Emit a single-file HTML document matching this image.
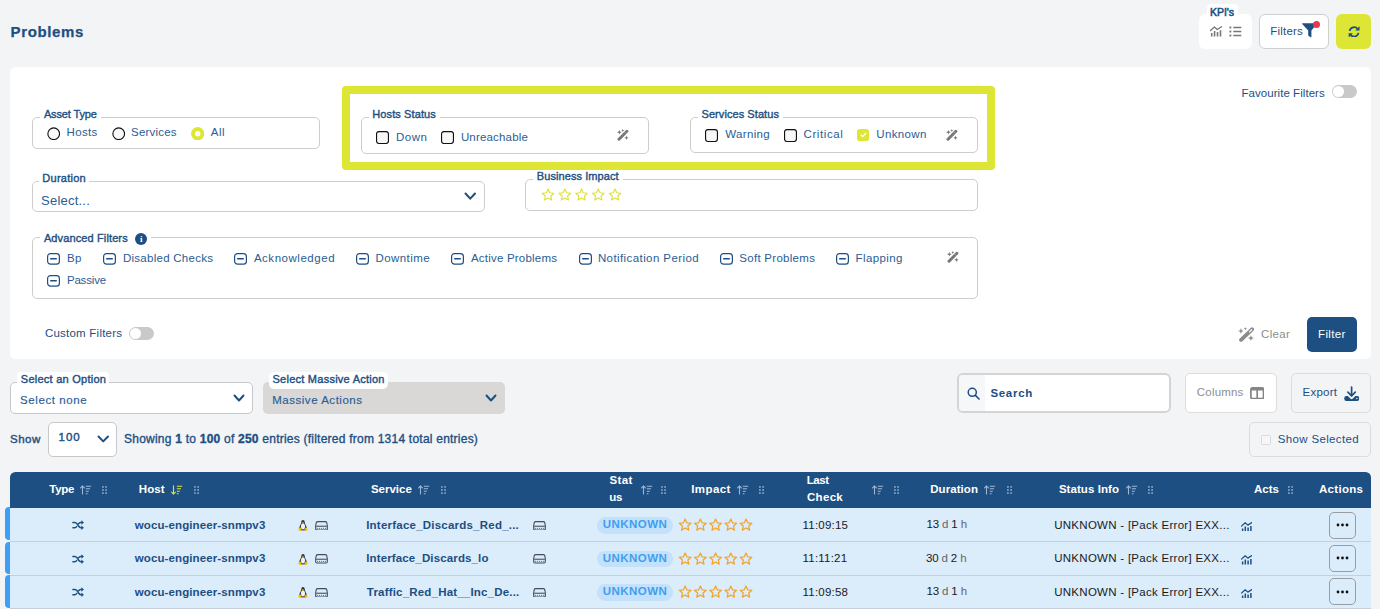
<!DOCTYPE html>
<html lang="en"><head><meta charset="utf-8"><title>Problems</title>
<style>
*{box-sizing:border-box;margin:0;padding:0}
html,body{width:1380px;height:609px;overflow:hidden;background:#f3f4f6;font-family:"Liberation Sans",sans-serif;color:#1d4f82}
.a{position:absolute}
.t{position:absolute;white-space:pre;line-height:1}
.fs{border:1px solid #cdcdcd;border-radius:5px}
</style></head><body>
<div class="t" style="left:10.5px;top:24px;font-size:15px;color:#1d4f82;letter-spacing:0.655px;font-weight:bold;-webkit-text-stroke:0.25px">Problems</div>
<div class="a" style="left:1199px;top:14px;width:53px;height:35px;background:#fff;border-radius:6px"></div>
<div class="a" style="left:1207px;top:4px;width:31px;height:14px;background:#fff;border-radius:4px"></div>
<div class="t" style="left:1210.1px;top:7px;font-size:10.5px;color:#1d4f82;letter-spacing:-0.080px;-webkit-text-stroke:0.550px">KPI's</div>
<svg class="a" style="left:1209.8px;top:26.3px;" width="12.2" height="10.6" viewBox="0 0 11.500 9.600"><path d="M0.500 4.100L4.200 0.800 6.800 3.100 10.900 0.500" fill="none" stroke="#777" stroke-width="1.250" stroke-linecap="round" stroke-linejoin="round"/><path d="M1.600 6.500V9.600M4.300 4.500V9.600M7.100 5.500V9.600M9.900 3.900V9.600" stroke="#777" stroke-width="1.500"/></svg>
<svg class="a" style="left:1229px;top:26px;" width="13" height="11" viewBox="0 0 13 11"><path d="M0.500 1.500h1.800M0.500 5.500h1.800M0.500 9.500h1.800" stroke="#777" stroke-width="1.800"/><path d="M4.300 1.500h8M4.300 5.500h8M4.300 9.500h8" stroke="#777" stroke-width="1.400"/></svg>
<div class="a" style="left:1259px;top:14px;width:70px;height:35px;background:#fff;border:1px solid #cfcfcf;border-radius:6px"></div>
<div class="t" style="left:1270.3px;top:26px;font-size:11.5px;color:#1d4f82;letter-spacing:0.209px;">Filters</div>
<svg class="a" style="left:1302px;top:22px;" width="16" height="16" viewBox="0 0 16 16"><path d="M0.600 1.200h13.800c.5 0 .7.500.4.900L9.400 8.600v6.200c0 .5-.5.700-.9.400l-2-1.500c-.2-.2-.3-.4-.3-.6V8.600L0.200 2.100c-.3-.4-.1-.9.400-.9z" fill="#1d4f82"/></svg>
<div class="a" style="left:1312.9px;top:20.7px;width:7.2px;height:7.2px;background:#e8384f;border-radius:50%"></div>
<div class="a" style="left:1336px;top:14px;width:35px;height:35px;background:#dde535;border-radius:6px"></div>
<svg class="a" style="left:1347.7px;top:25.7px;" width="12.2" height="11.8" viewBox="0 0 13 13"><path d="M1.600 5.400A5 5 0 0 1 10.500 3.300M11.400 7.600A5 5 0 0 1 2.500 9.700" fill="none" stroke="#1d4f82" stroke-width="2"/><path d="M12.500 0.300v4.700H7.800zM0.500 12.700V8h4.700z" fill="#1d4f82"/></svg>
<div class="a" style="left:10px;top:67px;width:1361px;height:292px;background:#fff;border-radius:5px"></div>
<div class="a" style="left:342px;top:86px;width:653px;height:84px;border:8px solid #dde535;border-radius:4px"></div>
<div class="a fs" style="left:32px;top:117px;width:288px;height:32px;"></div>
<div class="a" style="left:40px;top:108px;width:61px;height:12px;background:#fff;border-radius:0px"></div>
<div class="t" style="left:43.9px;top:109px;font-size:11px;color:#1d4f82;letter-spacing:-0.129px;-webkit-text-stroke:0.380px">Asset Type</div>
<svg class="a" style="left:46.7px;top:126.7px;" width="13.4" height="13.4" viewBox="0 0 13.400 13.400"><circle cx="6.700" cy="6.700" r="5.850" fill="#f9f9f9" stroke="#111" stroke-width="1.120"/></svg>
<div class="t" style="left:66.6px;top:127px;font-size:11.5px;color:#2a5d94;letter-spacing:0.337px;">Hosts</div>
<svg class="a" style="left:111.6px;top:126.7px;" width="13.4" height="13.4" viewBox="0 0 13.400 13.400"><circle cx="6.700" cy="6.700" r="5.850" fill="#f9f9f9" stroke="#111" stroke-width="1.120"/></svg>
<div class="t" style="left:131.0px;top:127px;font-size:11.5px;color:#2a5d94;letter-spacing:0.208px;">Services</div>
<svg class="a" style="left:190.8px;top:126.8px;" width="13.4" height="13.4" viewBox="0 0 13.400 13.400"><circle cx="6.700" cy="6.700" r="4.700" fill="#fbfbfb" stroke="#dde535" stroke-width="3.900"/></svg>
<div class="t" style="left:210.7px;top:127px;font-size:11.5px;color:#2a5d94;letter-spacing:0.556px;">All</div>
<div class="a fs" style="left:361px;top:117px;width:288px;height:37px;"></div>
<div class="a" style="left:369px;top:108px;width:71px;height:12px;background:#fff;border-radius:0px"></div>
<div class="t" style="left:372.3px;top:109px;font-size:11px;color:#1d4f82;letter-spacing:0.102px;-webkit-text-stroke:0.380px">Hosts Status</div>
<svg class="a" style="left:376px;top:131px;" width="13" height="13" viewBox="0 0 13 13"><rect x="0.550" y="0.550" width="11.900" height="11.900" rx="2.400" fill="#f8f8f8" stroke="#111" stroke-width="1.150"/></svg>
<div class="t" style="left:395.9px;top:132px;font-size:11.5px;color:#2a5d94;letter-spacing:0.539px;">Down</div>
<svg class="a" style="left:441px;top:131px;" width="13" height="13" viewBox="0 0 13 13"><rect x="0.550" y="0.550" width="11.900" height="11.900" rx="2.400" fill="#f8f8f8" stroke="#111" stroke-width="1.150"/></svg>
<div class="t" style="left:460.9px;top:132px;font-size:11.5px;color:#2a5d94;letter-spacing:0.176px;">Unreachable</div>
<svg class="a" style="left:617px;top:129.2px;" width="12" height="12" viewBox="0 0 24 24"><path d="M4 20.400L19.800 4.600" stroke="#787878" stroke-width="6" stroke-linecap="round"/><path d="M15 5.600l3.400 3.400" stroke="#fff" stroke-width="1" opacity="0.75"/><path d="M4.8 1.7999999999999998L6.116 5.183999999999999L9.5 6.5L6.116 7.816000000000001L4.8 11.2L3.4839999999999995 7.816000000000001L0.09999999999999964 6.5L3.4839999999999995 5.183999999999999zM11.6 0L12.44 2.16L14.6 3L12.44 3.84L11.6 6L10.76 3.84L8.6 3L10.76 2.16zM19 13.2L20.26 16.439999999999998L23.5 17.7L20.26 18.96L19 22.2L17.74 18.96L14.5 17.7L17.74 16.439999999999998z" fill="#787878"/></svg>
<div class="a fs" style="left:690px;top:117px;width:288px;height:36px;"></div>
<div class="a" style="left:698px;top:108px;width:85px;height:12px;background:#fff;border-radius:0px"></div>
<div class="t" style="left:701.5px;top:109px;font-size:11px;color:#1d4f82;letter-spacing:0.069px;-webkit-text-stroke:0.380px">Services Status</div>
<svg class="a" style="left:705px;top:129px;" width="13" height="13" viewBox="0 0 13 13"><rect x="0.550" y="0.550" width="11.900" height="11.900" rx="2.400" fill="#f8f8f8" stroke="#111" stroke-width="1.150"/></svg>
<div class="t" style="left:725.2px;top:129px;font-size:11.5px;color:#2a5d94;letter-spacing:0.360px;">Warning</div>
<svg class="a" style="left:784px;top:129px;" width="13" height="13" viewBox="0 0 13 13"><rect x="0.550" y="0.550" width="11.900" height="11.900" rx="2.400" fill="#f8f8f8" stroke="#111" stroke-width="1.150"/></svg>
<div class="t" style="left:803.6px;top:129px;font-size:11.5px;color:#2a5d94;letter-spacing:0.570px;">Critical</div>
<div class="a" style="left:857px;top:128.8px;width:12px;height:12.3px;background:#dde535;border-radius:2.800px"></div>
<svg class="a" style="left:859.7px;top:132.2px;" width="6.9" height="6" viewBox="0 0 8 7"><path d="M1.200 3.600L3.100 5.400 6.700 1.500" fill="none" stroke="#fff" stroke-width="1.500" stroke-linecap="round" stroke-linejoin="round"/></svg>
<div class="t" style="left:876.2px;top:129px;font-size:11.5px;color:#2a5d94;letter-spacing:0.385px;">Unknown</div>
<svg class="a" style="left:946px;top:129.2px;" width="12" height="12" viewBox="0 0 24 24"><path d="M4 20.400L19.800 4.600" stroke="#787878" stroke-width="6" stroke-linecap="round"/><path d="M15 5.600l3.400 3.400" stroke="#fff" stroke-width="1" opacity="0.75"/><path d="M4.8 1.7999999999999998L6.116 5.183999999999999L9.5 6.5L6.116 7.816000000000001L4.8 11.2L3.4839999999999995 7.816000000000001L0.09999999999999964 6.5L3.4839999999999995 5.183999999999999zM11.6 0L12.44 2.16L14.6 3L12.44 3.84L11.6 6L10.76 3.84L8.6 3L10.76 2.16zM19 13.2L20.26 16.439999999999998L23.5 17.7L20.26 18.96L19 22.2L17.74 18.96L14.5 17.7L17.74 16.439999999999998z" fill="#787878"/></svg>
<div class="t" style="left:1241.4px;top:88px;font-size:11.5px;color:#1d4f82;letter-spacing:0.057px;">Favourite Filters</div>
<div class="a" style="left:1332px;top:85px;width:25px;height:13px;border-radius:7px;background:#c9c9c9"></div>
<div class="a" style="left:1333px;top:86px;width:11px;height:11px;border-radius:50%;background:#fff"></div>
<div class="a fs" style="left:32px;top:181px;width:453px;height:31px;"></div>
<div class="a" style="left:39px;top:172px;width:50px;height:12px;background:#fff;border-radius:0px"></div>
<div class="t" style="left:42.3px;top:173px;font-size:11px;color:#1d4f82;letter-spacing:0.259px;-webkit-text-stroke:0.380px">Duration</div>
<div class="t" style="left:41.1px;top:194px;font-size:13px;color:#2a5d94;letter-spacing:0.211px;">Select...</div>
<svg class="a" style="left:464px;top:192px;" width="12.5" height="8.5" viewBox="-1 -1 12.5 8.5"><path d="M0.5 0.5 L5.25 5.7 L10.0 0.5" fill="none" stroke="#1d4f82" stroke-width="2" stroke-linecap="round" stroke-linejoin="round"/></svg>
<div class="a fs" style="left:525px;top:179px;width:453px;height:32px;"></div>
<div class="a" style="left:533px;top:170px;width:90px;height:12px;background:#fff;border-radius:0px"></div>
<div class="t" style="left:536.8px;top:171px;font-size:11px;color:#1d4f82;letter-spacing:0.078px;-webkit-text-stroke:0.380px">Business Impact</div>
<svg class="a" style="left:539.50px;top:186.50px;" width="83.20" height="16.20" viewBox="0 0 83.20 16.20"><polygon points="8.10,2.00 9.79,5.78 13.90,6.21 10.83,8.99 11.69,13.04 8.10,10.97 4.51,13.04 5.37,8.99 2.30,6.21 6.41,5.78" fill="none" stroke="#dde23a" stroke-width="1.15" stroke-linejoin="round"/><polygon points="24.85,2.00 26.54,5.78 30.65,6.21 27.58,8.99 28.44,13.04 24.85,10.97 21.26,13.04 22.12,8.99 19.05,6.21 23.16,5.78" fill="none" stroke="#dde23a" stroke-width="1.15" stroke-linejoin="round"/><polygon points="41.60,2.00 43.29,5.78 47.40,6.21 44.33,8.99 45.19,13.04 41.60,10.97 38.01,13.04 38.87,8.99 35.80,6.21 39.91,5.78" fill="none" stroke="#dde23a" stroke-width="1.15" stroke-linejoin="round"/><polygon points="58.35,2.00 60.04,5.78 64.15,6.21 61.08,8.99 61.94,13.04 58.35,10.97 54.76,13.04 55.62,8.99 52.55,6.21 56.66,5.78" fill="none" stroke="#dde23a" stroke-width="1.15" stroke-linejoin="round"/><polygon points="75.10,2.00 76.79,5.78 80.90,6.21 77.83,8.99 78.69,13.04 75.10,10.97 71.51,13.04 72.37,8.99 69.30,6.21 73.41,5.78" fill="none" stroke="#dde23a" stroke-width="1.15" stroke-linejoin="round"/></svg>
<div class="a fs" style="left:32px;top:237px;width:946px;height:62px;"></div>
<div class="a" style="left:40px;top:231px;width:111px;height:12px;background:#fff;border-radius:0px"></div>
<div class="t" style="left:43.9px;top:233px;font-size:11px;color:#1d4f82;letter-spacing:0.123px;-webkit-text-stroke:0.380px">Advanced Filters</div>
<div class="a" style="left:135.1px;top:232.9px;width:12.4px;height:12.4px;background:#1d4f82;border-radius:50%"></div>
<div class="t" style="left:135.100px;top:234.600px;width:12.400px;text-align:center;font-size:9px;font-weight:bold;color:#fff;font-family:'Liberation Serif',serif">i</div>
<svg class="a" style="left:47px;top:253px;" width="13" height="11.7" viewBox="0 0 13 11.700"><rect x="0.600" y="0.600" width="11.800" height="10.500" rx="2.900" fill="#fff" stroke="#1d4f82" stroke-width="1.200"/><path d="M3.700 5.850H9.300" stroke="#1d4f82" stroke-width="1.450" stroke-linecap="round"/></svg>
<div class="t" style="left:66.9px;top:253px;font-size:11.5px;color:#2a5d94;letter-spacing:0.496px;">Bp</div>
<svg class="a" style="left:103px;top:253px;" width="13" height="11.7" viewBox="0 0 13 11.700"><rect x="0.600" y="0.600" width="11.800" height="10.500" rx="2.900" fill="#fff" stroke="#1d4f82" stroke-width="1.200"/><path d="M3.700 5.850H9.300" stroke="#1d4f82" stroke-width="1.450" stroke-linecap="round"/></svg>
<div class="t" style="left:122.9px;top:253px;font-size:11.5px;color:#2a5d94;letter-spacing:0.273px;">Disabled Checks</div>
<svg class="a" style="left:234px;top:253px;" width="13" height="11.7" viewBox="0 0 13 11.700"><rect x="0.600" y="0.600" width="11.800" height="10.500" rx="2.900" fill="#fff" stroke="#1d4f82" stroke-width="1.200"/><path d="M3.700 5.850H9.300" stroke="#1d4f82" stroke-width="1.450" stroke-linecap="round"/></svg>
<div class="t" style="left:253.9px;top:253px;font-size:11.5px;color:#2a5d94;letter-spacing:0.531px;">Acknowledged</div>
<svg class="a" style="left:356px;top:253px;" width="13" height="11.7" viewBox="0 0 13 11.700"><rect x="0.600" y="0.600" width="11.800" height="10.500" rx="2.900" fill="#fff" stroke="#1d4f82" stroke-width="1.200"/><path d="M3.700 5.850H9.300" stroke="#1d4f82" stroke-width="1.450" stroke-linecap="round"/></svg>
<div class="t" style="left:375.4px;top:253px;font-size:11.5px;color:#2a5d94;letter-spacing:0.446px;">Downtime</div>
<svg class="a" style="left:451px;top:253px;" width="13" height="11.7" viewBox="0 0 13 11.700"><rect x="0.600" y="0.600" width="11.800" height="10.500" rx="2.900" fill="#fff" stroke="#1d4f82" stroke-width="1.200"/><path d="M3.700 5.850H9.300" stroke="#1d4f82" stroke-width="1.450" stroke-linecap="round"/></svg>
<div class="t" style="left:470.9px;top:253px;font-size:11.5px;color:#2a5d94;letter-spacing:0.215px;">Active Problems</div>
<svg class="a" style="left:579px;top:253px;" width="13" height="11.7" viewBox="0 0 13 11.700"><rect x="0.600" y="0.600" width="11.800" height="10.500" rx="2.900" fill="#fff" stroke="#1d4f82" stroke-width="1.200"/><path d="M3.700 5.850H9.300" stroke="#1d4f82" stroke-width="1.450" stroke-linecap="round"/></svg>
<div class="t" style="left:597.9px;top:253px;font-size:11.5px;color:#2a5d94;letter-spacing:0.411px;">Notification Period</div>
<svg class="a" style="left:720px;top:253px;" width="13" height="11.7" viewBox="0 0 13 11.700"><rect x="0.600" y="0.600" width="11.800" height="10.500" rx="2.900" fill="#fff" stroke="#1d4f82" stroke-width="1.200"/><path d="M3.700 5.850H9.300" stroke="#1d4f82" stroke-width="1.450" stroke-linecap="round"/></svg>
<div class="t" style="left:739.3px;top:253px;font-size:11.5px;color:#2a5d94;letter-spacing:0.281px;">Soft Problems</div>
<svg class="a" style="left:836px;top:253px;" width="13" height="11.7" viewBox="0 0 13 11.700"><rect x="0.600" y="0.600" width="11.800" height="10.500" rx="2.900" fill="#fff" stroke="#1d4f82" stroke-width="1.200"/><path d="M3.700 5.850H9.300" stroke="#1d4f82" stroke-width="1.450" stroke-linecap="round"/></svg>
<div class="t" style="left:855.6px;top:253px;font-size:11.5px;color:#2a5d94;letter-spacing:0.373px;">Flapping</div>
<svg class="a" style="left:47px;top:275px;" width="13" height="11.7" viewBox="0 0 13 11.700"><rect x="0.600" y="0.600" width="11.800" height="10.500" rx="2.900" fill="#fff" stroke="#1d4f82" stroke-width="1.200"/><path d="M3.700 5.850H9.300" stroke="#1d4f82" stroke-width="1.450" stroke-linecap="round"/></svg>
<div class="t" style="left:66.9px;top:275px;font-size:11.5px;color:#2a5d94;letter-spacing:-0.171px;">Passive</div>
<svg class="a" style="left:947px;top:251px;" width="12" height="12" viewBox="0 0 24 24"><path d="M4 20.400L19.800 4.600" stroke="#787878" stroke-width="6" stroke-linecap="round"/><path d="M15 5.600l3.400 3.400" stroke="#fff" stroke-width="1" opacity="0.75"/><path d="M4.8 1.7999999999999998L6.116 5.183999999999999L9.5 6.5L6.116 7.816000000000001L4.8 11.2L3.4839999999999995 7.816000000000001L0.09999999999999964 6.5L3.4839999999999995 5.183999999999999zM11.6 0L12.44 2.16L14.6 3L12.44 3.84L11.6 6L10.76 3.84L8.6 3L10.76 2.16zM19 13.2L20.26 16.439999999999998L23.5 17.7L20.26 18.96L19 22.2L17.74 18.96L14.5 17.7L17.74 16.439999999999998z" fill="#787878"/></svg>
<div class="t" style="left:44.9px;top:328px;font-size:11.5px;color:#1d4f82;letter-spacing:0.235px;">Custom Filters</div>
<div class="a" style="left:129px;top:327px;width:25px;height:13px;border-radius:7px;background:#c9c9c9"></div>
<div class="a" style="left:130px;top:328px;width:11px;height:11px;border-radius:50%;background:#fff"></div>
<svg class="a" style="left:1237.5px;top:326.5px;" width="16.5" height="15" viewBox="0 0 16.500 15"><path d="M3.100 12.800L14.100 2.400" stroke="#8a8a8a" stroke-width="3.900" stroke-linecap="round"/><path d="M11.500 4.900L13.700 2.800" stroke="#fff" stroke-width="1.300" stroke-linecap="round"/><path d="M2.9 1.1L3.654 3.246L5.8 4.0L3.654 4.754L2.9 6.9L2.146 4.754L0.0 4.0L2.146 3.246zM7.4 0.0L7.8420000000000005 1.258L9.1 1.7L7.8420000000000005 2.142L7.4 3.4L6.958 2.142L5.7 1.7L6.958 1.258zM12.9 8.1L13.68 10.32L15.9 11.1L13.68 11.879999999999999L12.9 14.1L12.120000000000001 11.879999999999999L9.9 11.1L12.120000000000001 10.32z" fill="#8a8a8a"/></svg>
<div class="t" style="left:1261.1px;top:329px;font-size:11.5px;color:#8c8c8c;letter-spacing:0.306px;">Clear</div>
<div class="a" style="left:1307px;top:317px;width:50px;height:35px;background:#1d4f82;border-radius:5px"></div>
<div class="t" style="left:1318.1px;top:329px;font-size:11.5px;color:#fff;letter-spacing:0.338px;">Filter</div>
<div class="a" style="left:10px;top:382px;width:243px;height:32px;background:#fff;border:1px solid #c8c8c8;border-radius:5px"></div>
<div class="a" style="left:17px;top:372px;width:92px;height:14px;background:#fff;border-radius:4px"></div>
<div class="t" style="left:20.8px;top:374px;font-size:11px;color:#1d4f82;letter-spacing:0.251px;-webkit-text-stroke:0.4px">Select an Option</div>
<div class="t" style="left:20.0px;top:395px;font-size:11.5px;color:#2a5d94;letter-spacing:0.598px;-webkit-text-stroke:0.15px">Select none</div>
<svg class="a" style="left:232.75px;top:394.3px;" width="12" height="8.3" viewBox="-1 -1 12 8.3"><path d="M0.5 0.5 L5.0 5.5 L9.5 0.5" fill="none" stroke="#1d4f82" stroke-width="2" stroke-linecap="round" stroke-linejoin="round"/></svg>
<div class="a" style="left:262.5px;top:382px;width:242px;height:31.5px;background:#d9d8d7;border-radius:5px"></div>
<div class="a" style="left:269px;top:372px;width:119px;height:17px;background:#fff;border-radius:5px"></div>
<div class="t" style="left:272.5px;top:374px;font-size:11px;color:#1d4f82;letter-spacing:0.249px;-webkit-text-stroke:0.4px">Select Massive Action</div>
<div class="t" style="left:272.2px;top:395px;font-size:11.5px;color:#2a5d94;letter-spacing:0.529px;-webkit-text-stroke:0.15px">Massive Actions</div>
<svg class="a" style="left:484.5px;top:394.3px;" width="12" height="8.3" viewBox="-1 -1 12 8.3"><path d="M0.5 0.5 L5.0 5.5 L9.5 0.5" fill="none" stroke="#1d4f82" stroke-width="2" stroke-linecap="round" stroke-linejoin="round"/></svg>
<div class="a" style="left:957px;top:373px;width:213.5px;height:40px;background:#fff;border:2px solid #d4d4d4;border-radius:6px"></div>
<div class="a" style="left:959px;top:375px;width:25.5px;height:36px;background:#f6f7f9;border-radius:4px 0 0 4px"></div>
<svg class="a" style="left:967.2px;top:387.3px;" width="13.2" height="13.2" viewBox="0 0 14 14"><circle cx="5.600" cy="5.600" r="4.300" fill="none" stroke="#1d4f82" stroke-width="1.600"/><path d="M8.900 8.900L12.800 12.800" stroke="#1d4f82" stroke-width="1.700" stroke-linecap="round"/></svg>
<div class="t" style="left:990.4px;top:388px;font-size:11.5px;color:#1d4f82;letter-spacing:0.705px;font-weight:bold;">Search</div>
<div class="a" style="left:1185px;top:373px;width:92px;height:40px;background:#fff;border:1px solid #dcdcdc;border-radius:5px"></div>
<div class="t" style="left:1196.8px;top:387px;font-size:11.5px;color:#8e8e8e;letter-spacing:0.194px;">Columns</div>
<svg class="a" style="left:1250px;top:386.8px;" width="14.4" height="12.6" viewBox="0 0 14.400 12.600"><rect x="0.900" y="0.900" width="12.600" height="10.800" rx="1.500" fill="none" stroke="#858585" stroke-width="1.700"/><path d="M0.900 2.200h12.600" stroke="#858585" stroke-width="2.600"/><path d="M7.200 2v10" stroke="#858585" stroke-width="1.700"/></svg>
<div class="a" style="left:1291px;top:373px;width:80px;height:40px;border:1px solid #dcdcdc;border-radius:5px"></div>
<div class="t" style="left:1302.5px;top:387px;font-size:11.5px;color:#1d4f82;letter-spacing:0.240px;">Export</div>
<svg class="a" style="left:1343.5px;top:386px;" width="15.5" height="15.2" viewBox="0 0 15.5 15.2"><rect x="0.200" y="10" width="15.100" height="5" rx="2.300" fill="#1d4f82"/><path d="M4.600 8.200L7.600 11.300 10.600 8.200" fill="none" stroke="#f3f4f6" stroke-width="3.600" stroke-linejoin="round"/><path d="M7.600 1V10M3.900 6.200L7.600 10 11.300 6.200" fill="none" stroke="#1d4f82" stroke-width="1.700" stroke-linecap="round" stroke-linejoin="round"/><circle cx="12.900" cy="12.500" r="0.750" fill="#f3f4f6"/></svg>
<div class="a" style="left:1249px;top:422px;width:122px;height:35px;border:1px solid #dcdcdc;border-radius:5px"></div>
<div class="a" style="left:1261.3px;top:435px;width:9.7px;height:9.7px;border:1px solid #dadada;border-radius:1.500px;background:#f6f6f7"></div>
<div class="t" style="left:1277.8px;top:434px;font-size:11.5px;color:#1d4f82;letter-spacing:0.342px;">Show Selected</div>
<div class="t" style="left:10.0px;top:434px;font-size:11.5px;color:#1d4f82;letter-spacing:0.506px;-webkit-text-stroke:0.4px">Show</div>
<div class="a" style="left:48px;top:422px;width:69px;height:35px;background:#fff;border:1px solid #c8c8c8;border-radius:5px"></div>
<div class="t" style="left:58.6px;top:432px;font-size:11.5px;color:#1d4f82;letter-spacing:0.909px;-webkit-text-stroke:0.4px">100</div>
<svg class="a" style="left:97px;top:435.3px;" width="12.5" height="8.2" viewBox="-1 -1 12.5 8.2"><path d="M0.5 0.5 L5.25 5.4 L10.0 0.5" fill="none" stroke="#1d4f82" stroke-width="2" stroke-linecap="round" stroke-linejoin="round"/></svg>
<div class="t" id="showing" style="left:124px;top:433px;font-size:12px;color:#1d4f82;-webkit-text-stroke:0.35px;letter-spacing:0.230px">Showing <b>1</b> to <b>100</b> of <b>250</b> entries (filtered from 1314 total entries)</div>
<div class="a" style="left:10px;top:472px;width:1361px;height:36px;background:#1d4f82;border-radius:5.500px 5.500px 0 0"></div>
<div class="t" style="left:49.3px;top:484px;font-size:11.5px;color:#fff;letter-spacing:-0.267px;font-weight:bold;">Type</div>
<svg class="a" style="left:80px;top:485px;" width="12" height="10" viewBox="0 0 12 10"><path d="M2.5 9V1M0.6 2.900L2.500 0.800 4.400 2.900" fill="none" stroke="#9db7d3" stroke-width="1.1" stroke-linecap="round" stroke-linejoin="round"/><path d="M5.800 1.300H11.200M5.800 3.800H10M5.800 6.300H8.800M5.800 8.700H7.600" stroke="#9db7d3" stroke-width="1.1"/></svg>
<svg class="a" style="left:102px;top:486px;" width="5" height="8" viewBox="0 0 5 8"><rect x="0" y="0" width="1.800" height="1.800" fill="#7a9bc0"/><rect x="0" y="3.1" width="1.800" height="1.800" fill="#7a9bc0"/><rect x="0" y="6.2" width="1.800" height="1.800" fill="#7a9bc0"/><rect x="3.2" y="0" width="1.800" height="1.800" fill="#7a9bc0"/><rect x="3.2" y="3.1" width="1.800" height="1.800" fill="#7a9bc0"/><rect x="3.2" y="6.2" width="1.800" height="1.800" fill="#7a9bc0"/></svg>
<div class="t" style="left:138.7px;top:484px;font-size:11.5px;color:#fff;letter-spacing:0.150px;font-weight:bold;">Host</div>
<svg class="a" style="left:171px;top:485px;" width="12" height="10" viewBox="0 0 12 10"><path d="M2.5 0.800V9M0.600 7.100L2.500 9.200 4.400 7.100" fill="none" stroke="#dde535" stroke-width="1.1" stroke-linecap="round" stroke-linejoin="round"/><path d="M5.800 1.300H11.200M5.800 3.800H10M5.800 6.300H8.800M5.800 8.700H7.600" stroke="#dde535" stroke-width="1.1"/></svg>
<svg class="a" style="left:194px;top:486px;" width="5" height="8" viewBox="0 0 5 8"><rect x="0" y="0" width="1.800" height="1.800" fill="#7a9bc0"/><rect x="0" y="3.1" width="1.800" height="1.800" fill="#7a9bc0"/><rect x="0" y="6.2" width="1.800" height="1.800" fill="#7a9bc0"/><rect x="3.2" y="0" width="1.800" height="1.800" fill="#7a9bc0"/><rect x="3.2" y="3.1" width="1.800" height="1.800" fill="#7a9bc0"/><rect x="3.2" y="6.2" width="1.800" height="1.800" fill="#7a9bc0"/></svg>
<div class="t" style="left:370.9px;top:484px;font-size:11.5px;color:#fff;letter-spacing:-0.005px;font-weight:bold;">Service</div>
<svg class="a" style="left:418px;top:485px;" width="12" height="10" viewBox="0 0 12 10"><path d="M2.5 9V1M0.6 2.900L2.500 0.800 4.400 2.900" fill="none" stroke="#9db7d3" stroke-width="1.1" stroke-linecap="round" stroke-linejoin="round"/><path d="M5.800 1.300H11.200M5.800 3.800H10M5.800 6.300H8.800M5.800 8.700H7.600" stroke="#9db7d3" stroke-width="1.1"/></svg>
<svg class="a" style="left:441px;top:486px;" width="5" height="8" viewBox="0 0 5 8"><rect x="0" y="0" width="1.800" height="1.800" fill="#7a9bc0"/><rect x="0" y="3.1" width="1.800" height="1.800" fill="#7a9bc0"/><rect x="0" y="6.2" width="1.800" height="1.800" fill="#7a9bc0"/><rect x="3.2" y="0" width="1.800" height="1.800" fill="#7a9bc0"/><rect x="3.2" y="3.1" width="1.800" height="1.800" fill="#7a9bc0"/><rect x="3.2" y="6.2" width="1.800" height="1.800" fill="#7a9bc0"/></svg>
<div class="t" style="left:609.4px;top:475px;font-size:11.5px;color:#fff;letter-spacing:0.428px;font-weight:bold;">Stat</div>
<div class="t" style="left:609.3px;top:492px;font-size:11.5px;color:#fff;letter-spacing:-0.275px;font-weight:bold;">us</div>
<svg class="a" style="left:641px;top:485px;" width="12" height="10" viewBox="0 0 12 10"><path d="M2.5 9V1M0.6 2.900L2.500 0.800 4.400 2.900" fill="none" stroke="#9db7d3" stroke-width="1.1" stroke-linecap="round" stroke-linejoin="round"/><path d="M5.800 1.300H11.200M5.800 3.800H10M5.800 6.300H8.800M5.800 8.700H7.600" stroke="#9db7d3" stroke-width="1.1"/></svg>
<svg class="a" style="left:661px;top:486px;" width="5" height="8" viewBox="0 0 5 8"><rect x="0" y="0" width="1.800" height="1.800" fill="#7a9bc0"/><rect x="0" y="3.1" width="1.800" height="1.800" fill="#7a9bc0"/><rect x="0" y="6.2" width="1.800" height="1.800" fill="#7a9bc0"/><rect x="3.2" y="0" width="1.800" height="1.800" fill="#7a9bc0"/><rect x="3.2" y="3.1" width="1.800" height="1.800" fill="#7a9bc0"/><rect x="3.2" y="6.2" width="1.800" height="1.800" fill="#7a9bc0"/></svg>
<div class="t" style="left:691.2px;top:484px;font-size:11.5px;color:#fff;letter-spacing:0.434px;font-weight:bold;">Impact</div>
<svg class="a" style="left:737px;top:485px;" width="12" height="10" viewBox="0 0 12 10"><path d="M2.5 9V1M0.6 2.900L2.500 0.800 4.400 2.900" fill="none" stroke="#9db7d3" stroke-width="1.1" stroke-linecap="round" stroke-linejoin="round"/><path d="M5.800 1.300H11.200M5.800 3.800H10M5.800 6.300H8.800M5.800 8.700H7.600" stroke="#9db7d3" stroke-width="1.1"/></svg>
<svg class="a" style="left:759px;top:486px;" width="5" height="8" viewBox="0 0 5 8"><rect x="0" y="0" width="1.800" height="1.800" fill="#7a9bc0"/><rect x="0" y="3.1" width="1.800" height="1.800" fill="#7a9bc0"/><rect x="0" y="6.2" width="1.800" height="1.800" fill="#7a9bc0"/><rect x="3.2" y="0" width="1.800" height="1.800" fill="#7a9bc0"/><rect x="3.2" y="3.1" width="1.800" height="1.800" fill="#7a9bc0"/><rect x="3.2" y="6.2" width="1.800" height="1.800" fill="#7a9bc0"/></svg>
<div class="t" style="left:806.7px;top:475px;font-size:11.5px;color:#fff;letter-spacing:-0.457px;font-weight:bold;">Last</div>
<div class="t" style="left:807.0px;top:492px;font-size:11.5px;color:#fff;letter-spacing:0.307px;font-weight:bold;">Check</div>
<svg class="a" style="left:872px;top:485px;" width="12" height="10" viewBox="0 0 12 10"><path d="M2.5 9V1M0.6 2.900L2.500 0.800 4.400 2.900" fill="none" stroke="#9db7d3" stroke-width="1.1" stroke-linecap="round" stroke-linejoin="round"/><path d="M5.800 1.300H11.200M5.800 3.800H10M5.800 6.300H8.800M5.800 8.700H7.600" stroke="#9db7d3" stroke-width="1.1"/></svg>
<svg class="a" style="left:894px;top:486px;" width="5" height="8" viewBox="0 0 5 8"><rect x="0" y="0" width="1.800" height="1.800" fill="#7a9bc0"/><rect x="0" y="3.1" width="1.800" height="1.800" fill="#7a9bc0"/><rect x="0" y="6.2" width="1.800" height="1.800" fill="#7a9bc0"/><rect x="3.2" y="0" width="1.800" height="1.800" fill="#7a9bc0"/><rect x="3.2" y="3.1" width="1.800" height="1.800" fill="#7a9bc0"/><rect x="3.2" y="6.2" width="1.800" height="1.800" fill="#7a9bc0"/></svg>
<div class="t" style="left:930.2px;top:484px;font-size:11.5px;color:#fff;letter-spacing:0.075px;font-weight:bold;">Duration</div>
<svg class="a" style="left:984px;top:485px;" width="12" height="10" viewBox="0 0 12 10"><path d="M2.5 9V1M0.6 2.900L2.500 0.800 4.400 2.900" fill="none" stroke="#9db7d3" stroke-width="1.1" stroke-linecap="round" stroke-linejoin="round"/><path d="M5.800 1.300H11.200M5.800 3.800H10M5.800 6.300H8.800M5.800 8.700H7.600" stroke="#9db7d3" stroke-width="1.1"/></svg>
<svg class="a" style="left:1007px;top:486px;" width="5" height="8" viewBox="0 0 5 8"><rect x="0" y="0" width="1.800" height="1.800" fill="#7a9bc0"/><rect x="0" y="3.1" width="1.800" height="1.800" fill="#7a9bc0"/><rect x="0" y="6.2" width="1.800" height="1.800" fill="#7a9bc0"/><rect x="3.2" y="0" width="1.800" height="1.800" fill="#7a9bc0"/><rect x="3.2" y="3.1" width="1.800" height="1.800" fill="#7a9bc0"/><rect x="3.2" y="6.2" width="1.800" height="1.800" fill="#7a9bc0"/></svg>
<div class="t" style="left:1058.9px;top:484px;font-size:11.5px;color:#fff;letter-spacing:0.060px;font-weight:bold;">Status Info</div>
<svg class="a" style="left:1126px;top:485px;" width="12" height="10" viewBox="0 0 12 10"><path d="M2.5 9V1M0.6 2.900L2.500 0.800 4.400 2.900" fill="none" stroke="#9db7d3" stroke-width="1.1" stroke-linecap="round" stroke-linejoin="round"/><path d="M5.800 1.300H11.200M5.800 3.800H10M5.800 6.300H8.800M5.800 8.700H7.600" stroke="#9db7d3" stroke-width="1.1"/></svg>
<svg class="a" style="left:1148px;top:486px;" width="5" height="8" viewBox="0 0 5 8"><rect x="0" y="0" width="1.800" height="1.800" fill="#7a9bc0"/><rect x="0" y="3.1" width="1.800" height="1.800" fill="#7a9bc0"/><rect x="0" y="6.2" width="1.800" height="1.800" fill="#7a9bc0"/><rect x="3.2" y="0" width="1.800" height="1.800" fill="#7a9bc0"/><rect x="3.2" y="3.1" width="1.800" height="1.800" fill="#7a9bc0"/><rect x="3.2" y="6.2" width="1.800" height="1.800" fill="#7a9bc0"/></svg>
<div class="t" style="left:1254.0px;top:484px;font-size:11.5px;color:#fff;letter-spacing:-0.018px;font-weight:bold;">Acts</div>
<svg class="a" style="left:1288px;top:486px;" width="5" height="8" viewBox="0 0 5 8"><rect x="0" y="0" width="1.800" height="1.800" fill="#7a9bc0"/><rect x="0" y="3.1" width="1.800" height="1.800" fill="#7a9bc0"/><rect x="0" y="6.2" width="1.800" height="1.800" fill="#7a9bc0"/><rect x="3.2" y="0" width="1.800" height="1.800" fill="#7a9bc0"/><rect x="3.2" y="3.1" width="1.800" height="1.800" fill="#7a9bc0"/><rect x="3.2" y="6.2" width="1.800" height="1.800" fill="#7a9bc0"/></svg>
<div class="t" style="left:1319.0px;top:484px;font-size:11.5px;color:#fff;letter-spacing:0.288px;font-weight:bold;">Actions</div>
<div class="a" style="left:10px;top:507.5px;width:1361px;height:34px;background:#dbecfb;border-bottom:1px solid #c9cfd6"></div>
<div class="a" style="left:5px;top:507.2px;width:5.200px;height:33.3px;background:#3d9ff5;border-radius:4px 0 0 4px"></div>
<svg class="a" style="left:71.8px;top:520.1px;" width="12.4" height="10.2" viewBox="0 0 13.600 11.400"><path d="M0.900 2.800h2c1.300 0 2 .6 2.700 1.600l2 2.900c.6.900 1.200 1.300 2.200 1.300h1.400" fill="none" stroke="#1d4f82" stroke-width="1.700" stroke-linecap="round"/><path d="M0.900 8.600h2c1 0 1.600-.4 2.200-1.200M7.200 4.200c.7-1 1.400-1.400 2.400-1.400h1.600" fill="none" stroke="#1d4f82" stroke-width="1.700" stroke-linecap="round"/><path d="M10.400 0.300L13.200 2.800 10.400 5.300z M10.400 6.100L13.200 8.600 10.400 11.100z" fill="#1d4f82"/></svg>
<div class="t" style="left:134.8px;top:520px;font-size:11.5px;color:#1d4f82;letter-spacing:0.107px;font-weight:bold;">wocu-engineer-snmpv3</div>
<svg class="a" style="left:297.8px;top:520.0px;" width="10" height="11.5" viewBox="0 0 10 11.500"><path d="M3.300 2.600C3.300 4.400 1.200 6 1.200 8.400L3 10.200H7L8.800 8.400C8.800 6 6.700 4.400 6.700 2.600z" fill="#2b3641"/><ellipse cx="5" cy="1.900" rx="1.750" ry="1.800" fill="#2b3641"/><ellipse cx="5" cy="6.600" rx="2.050" ry="3" fill="#f1f1f1"/><path d="M3.300 10.300h3.400v-.7H3.300z" fill="#555e66"/><ellipse cx="4.900" cy="3.100" rx="1.050" ry="0.850" fill="#f0b31a"/><path d="M0.200 9.300L2.100 7.100 3.700 10.100C3.300 11.400 .7 11.300 .2 9.300z" fill="#fbbc05"/><path d="M9.800 9.300L7.900 7.300 6.300 10.100C6.700 11.400 9.300 11.300 9.800 9.300z" fill="#fbbc05"/></svg>
<svg class="a" style="left:315px;top:520.5px;" width="13" height="9.7" viewBox="0 0 13 10"><path d="M2.600 0.700h7.800c.8 0 1.300.4 1.500 1.100l.5 2.300c.1.300.1.600.1.900v3c0 .8-.5 1.300-1.300 1.300H1.800C1 9.300.5 8.800.5 8V5c0-.3 0-.6.100-.9l.5-2.300C1.300 1.100 1.800.7 2.600.7z" fill="none" stroke="#454c54" stroke-width="1.150"/><path d="M1 5.400h11" stroke="#454c54" stroke-width="1.100"/><circle cx="2.5" cy="7.400" r="0.550" fill="#454c54"/><circle cx="4.5" cy="7.400" r="0.550" fill="#454c54"/><circle cx="6.5" cy="7.400" r="0.550" fill="#454c54"/><circle cx="8.5" cy="7.400" r="0.550" fill="#454c54"/><circle cx="10.5" cy="7.400" r="0.550" fill="#454c54"/></svg>
<div class="t" style="left:366.2px;top:520px;font-size:11.5px;color:#1d4f82;letter-spacing:0.223px;font-weight:bold;">Interface_Discards_Red_...</div>
<svg class="a" style="left:533px;top:520.5px;" width="13" height="9.7" viewBox="0 0 13 10"><path d="M2.600 0.700h7.800c.8 0 1.300.4 1.500 1.100l.5 2.300c.1.300.1.600.1.900v3c0 .8-.5 1.300-1.300 1.300H1.800C1 9.300.5 8.800.5 8V5c0-.3 0-.6.100-.9l.5-2.300C1.300 1.100 1.800.7 2.600.7z" fill="none" stroke="#454c54" stroke-width="1.150"/><path d="M1 5.400h11" stroke="#454c54" stroke-width="1.100"/><circle cx="2.5" cy="7.400" r="0.550" fill="#454c54"/><circle cx="4.5" cy="7.400" r="0.550" fill="#454c54"/><circle cx="6.5" cy="7.400" r="0.550" fill="#454c54"/><circle cx="8.5" cy="7.400" r="0.550" fill="#454c54"/><circle cx="10.5" cy="7.400" r="0.550" fill="#454c54"/></svg>
<div class="a" style="left:597px;top:517px;width:76px;height:16.7px;background:#c4e1fb;border-radius:9px"></div>
<div class="t" style="left:602.8px;top:519px;font-size:11.5px;color:#3f9ef0;letter-spacing:0.434px;font-weight:bold;">UNKNOWN</div>
<svg class="a" style="left:676.85px;top:517.45px;" width="77.18" height="16.30" viewBox="0 0 77.18 16.30"><polygon points="8.15,2.00 9.85,5.81 14.00,6.25 10.90,9.04 11.76,13.13 8.15,11.04 4.54,13.13 5.40,9.04 2.30,6.25 6.45,5.81" fill="none" stroke="#f4a326" stroke-width="1.2" stroke-linejoin="round"/><polygon points="23.37,2.00 25.07,5.81 29.22,6.25 26.12,9.04 26.98,13.13 23.37,11.04 19.76,13.13 20.62,9.04 17.52,6.25 21.67,5.81" fill="none" stroke="#f4a326" stroke-width="1.2" stroke-linejoin="round"/><polygon points="38.59,2.00 40.29,5.81 44.44,6.25 41.34,9.04 42.20,13.13 38.59,11.04 34.98,13.13 35.84,9.04 32.74,6.25 36.89,5.81" fill="none" stroke="#f4a326" stroke-width="1.2" stroke-linejoin="round"/><polygon points="53.81,2.00 55.51,5.81 59.66,6.25 56.56,9.04 57.42,13.13 53.81,11.04 50.20,13.13 51.06,9.04 47.96,6.25 52.11,5.81" fill="none" stroke="#f4a326" stroke-width="1.2" stroke-linejoin="round"/><polygon points="69.03,2.00 70.73,5.81 74.88,6.25 71.78,9.04 72.64,13.13 69.03,11.04 65.42,13.13 66.28,9.04 63.18,6.25 67.33,5.81" fill="none" stroke="#f4a326" stroke-width="1.2" stroke-linejoin="round"/></svg>
<div class="t" style="left:802.6px;top:520px;font-size:11.5px;color:#1a1a1a;letter-spacing:0.196px;">11:09:15</div>
<div class="t" style="left:926.5px;top:519px;font-size:11.500px;color:#1a1a1a;letter-spacing:-0.150px">13 <span style="color:#666">d</span> 1 <span style="color:#666">h</span></div>
<div class="t" style="left:1054.2px;top:520px;font-size:11.5px;color:#1a1a1a;letter-spacing:0.278px;">UNKNOWN - [Pack Error] EXX...</div>
<svg class="a" style="left:1240.8px;top:521.7px;" width="11.5" height="9.6" viewBox="0 0 11.500 9.600"><path d="M0.500 4.100L4.200 0.800 6.800 3.100 10.900 0.500" fill="none" stroke="#1d4f82" stroke-width="1.250" stroke-linecap="round" stroke-linejoin="round"/><path d="M1.600 6.500V9.600M4.300 4.500V9.600M7.100 5.500V9.600M9.900 3.900V9.600" stroke="#1d4f82" stroke-width="1.500"/></svg>
<div class="a" style="left:1329.2px;top:512.3px;width:26.6px;height:26.6px;border:1px solid #979da3;border-radius:5px"></div>
<svg class="a" style="left:1336px;top:523px" width="13" height="4" viewBox="0 0 13 4"><circle cx="2" cy="2" r="1.400" fill="#111"/><circle cx="6.500" cy="2" r="1.400" fill="#111"/><circle cx="11" cy="2" r="1.400" fill="#111"/></svg>
<div class="a" style="left:10px;top:542px;width:1361px;height:33.5px;background:#dbecfb;border-bottom:1px solid #c9cfd6"></div>
<div class="a" style="left:5px;top:541.7px;width:5.200px;height:32.8px;background:#3d9ff5;border-radius:4px 0 0 4px"></div>
<svg class="a" style="left:71.8px;top:553.6px;" width="12.4" height="10.2" viewBox="0 0 13.600 11.400"><path d="M0.900 2.800h2c1.300 0 2 .6 2.700 1.600l2 2.900c.6.900 1.200 1.300 2.200 1.300h1.400" fill="none" stroke="#1d4f82" stroke-width="1.700" stroke-linecap="round"/><path d="M0.900 8.600h2c1 0 1.600-.4 2.200-1.200M7.200 4.200c.7-1 1.400-1.400 2.400-1.400h1.600" fill="none" stroke="#1d4f82" stroke-width="1.700" stroke-linecap="round"/><path d="M10.400 0.300L13.200 2.800 10.400 5.300z M10.400 6.100L13.200 8.600 10.400 11.100z" fill="#1d4f82"/></svg>
<div class="t" style="left:134.8px;top:553px;font-size:11.5px;color:#1d4f82;letter-spacing:0.107px;font-weight:bold;">wocu-engineer-snmpv3</div>
<svg class="a" style="left:297.8px;top:553.5px;" width="10" height="11.5" viewBox="0 0 10 11.500"><path d="M3.300 2.600C3.300 4.400 1.200 6 1.200 8.400L3 10.200H7L8.800 8.400C8.800 6 6.700 4.400 6.700 2.600z" fill="#2b3641"/><ellipse cx="5" cy="1.900" rx="1.750" ry="1.800" fill="#2b3641"/><ellipse cx="5" cy="6.600" rx="2.050" ry="3" fill="#f1f1f1"/><path d="M3.300 10.300h3.400v-.7H3.300z" fill="#555e66"/><ellipse cx="4.900" cy="3.100" rx="1.050" ry="0.850" fill="#f0b31a"/><path d="M0.200 9.300L2.100 7.100 3.700 10.100C3.300 11.400 .7 11.300 .2 9.300z" fill="#fbbc05"/><path d="M9.800 9.300L7.900 7.300 6.300 10.100C6.700 11.400 9.300 11.300 9.800 9.300z" fill="#fbbc05"/></svg>
<svg class="a" style="left:315px;top:554.0px;" width="13" height="9.7" viewBox="0 0 13 10"><path d="M2.600 0.700h7.800c.8 0 1.300.4 1.500 1.100l.5 2.300c.1.300.1.600.1.900v3c0 .8-.5 1.300-1.300 1.300H1.800C1 9.300.5 8.800.5 8V5c0-.3 0-.6.100-.9l.5-2.300C1.300 1.100 1.800.7 2.600.7z" fill="none" stroke="#454c54" stroke-width="1.150"/><path d="M1 5.400h11" stroke="#454c54" stroke-width="1.100"/><circle cx="2.5" cy="7.400" r="0.550" fill="#454c54"/><circle cx="4.5" cy="7.400" r="0.550" fill="#454c54"/><circle cx="6.5" cy="7.400" r="0.550" fill="#454c54"/><circle cx="8.5" cy="7.400" r="0.550" fill="#454c54"/><circle cx="10.5" cy="7.400" r="0.550" fill="#454c54"/></svg>
<div class="t" style="left:366.2px;top:553px;font-size:11.5px;color:#1d4f82;letter-spacing:0.138px;font-weight:bold;">Interface_Discards_lo</div>
<svg class="a" style="left:533px;top:554.0px;" width="13" height="9.7" viewBox="0 0 13 10"><path d="M2.600 0.700h7.800c.8 0 1.300.4 1.500 1.100l.5 2.300c.1.300.1.600.1.900v3c0 .8-.5 1.300-1.300 1.300H1.800C1 9.300.5 8.800.5 8V5c0-.3 0-.6.100-.9l.5-2.300C1.300 1.100 1.800.7 2.600.7z" fill="none" stroke="#454c54" stroke-width="1.150"/><path d="M1 5.400h11" stroke="#454c54" stroke-width="1.100"/><circle cx="2.5" cy="7.400" r="0.550" fill="#454c54"/><circle cx="4.5" cy="7.400" r="0.550" fill="#454c54"/><circle cx="6.5" cy="7.400" r="0.550" fill="#454c54"/><circle cx="8.5" cy="7.400" r="0.550" fill="#454c54"/><circle cx="10.5" cy="7.400" r="0.550" fill="#454c54"/></svg>
<div class="a" style="left:597px;top:550.5px;width:76px;height:16.7px;background:#c4e1fb;border-radius:9px"></div>
<div class="t" style="left:602.8px;top:553px;font-size:11.5px;color:#3f9ef0;letter-spacing:0.434px;font-weight:bold;">UNKNOWN</div>
<svg class="a" style="left:676.85px;top:550.95px;" width="77.18" height="16.30" viewBox="0 0 77.18 16.30"><polygon points="8.15,2.00 9.85,5.81 14.00,6.25 10.90,9.04 11.76,13.13 8.15,11.04 4.54,13.13 5.40,9.04 2.30,6.25 6.45,5.81" fill="none" stroke="#f4a326" stroke-width="1.2" stroke-linejoin="round"/><polygon points="23.37,2.00 25.07,5.81 29.22,6.25 26.12,9.04 26.98,13.13 23.37,11.04 19.76,13.13 20.62,9.04 17.52,6.25 21.67,5.81" fill="none" stroke="#f4a326" stroke-width="1.2" stroke-linejoin="round"/><polygon points="38.59,2.00 40.29,5.81 44.44,6.25 41.34,9.04 42.20,13.13 38.59,11.04 34.98,13.13 35.84,9.04 32.74,6.25 36.89,5.81" fill="none" stroke="#f4a326" stroke-width="1.2" stroke-linejoin="round"/><polygon points="53.81,2.00 55.51,5.81 59.66,6.25 56.56,9.04 57.42,13.13 53.81,11.04 50.20,13.13 51.06,9.04 47.96,6.25 52.11,5.81" fill="none" stroke="#f4a326" stroke-width="1.2" stroke-linejoin="round"/><polygon points="69.03,2.00 70.73,5.81 74.88,6.25 71.78,9.04 72.64,13.13 69.03,11.04 65.42,13.13 66.28,9.04 63.18,6.25 67.33,5.81" fill="none" stroke="#f4a326" stroke-width="1.2" stroke-linejoin="round"/></svg>
<div class="t" style="left:802.6px;top:553px;font-size:11.5px;color:#1a1a1a;letter-spacing:0.198px;">11:11:21</div>
<div class="t" style="left:926px;top:553px;font-size:11.500px;color:#1a1a1a;letter-spacing:-0.150px">30 <span style="color:#666">d</span> 2 <span style="color:#666">h</span></div>
<div class="t" style="left:1054.2px;top:553px;font-size:11.5px;color:#1a1a1a;letter-spacing:0.278px;">UNKNOWN - [Pack Error] EXX...</div>
<svg class="a" style="left:1240.8px;top:555.2px;" width="11.5" height="9.6" viewBox="0 0 11.500 9.600"><path d="M0.500 4.100L4.200 0.800 6.800 3.100 10.900 0.500" fill="none" stroke="#1d4f82" stroke-width="1.250" stroke-linecap="round" stroke-linejoin="round"/><path d="M1.600 6.500V9.600M4.300 4.500V9.600M7.100 5.500V9.600M9.900 3.900V9.600" stroke="#1d4f82" stroke-width="1.500"/></svg>
<div class="a" style="left:1329.2px;top:545px;width:26.6px;height:26.8px;border:1px solid #979da3;border-radius:5px"></div>
<svg class="a" style="left:1336px;top:556.3px" width="13" height="4" viewBox="0 0 13 4"><circle cx="2" cy="2" r="1.400" fill="#111"/><circle cx="6.500" cy="2" r="1.400" fill="#111"/><circle cx="11" cy="2" r="1.400" fill="#111"/></svg>
<div class="a" style="left:10px;top:575.5px;width:1361px;height:33.5px;background:#dbecfb;border-bottom:1px solid #c9cfd6"></div>
<div class="a" style="left:5px;top:575.2px;width:5.200px;height:32.8px;background:#3d9ff5;border-radius:4px 0 0 4px"></div>
<svg class="a" style="left:71.8px;top:587.1px;" width="12.4" height="10.2" viewBox="0 0 13.600 11.400"><path d="M0.900 2.800h2c1.300 0 2 .6 2.700 1.600l2 2.900c.6.900 1.200 1.300 2.200 1.300h1.400" fill="none" stroke="#1d4f82" stroke-width="1.700" stroke-linecap="round"/><path d="M0.900 8.600h2c1 0 1.600-.4 2.200-1.200M7.200 4.200c.7-1 1.400-1.400 2.400-1.400h1.600" fill="none" stroke="#1d4f82" stroke-width="1.700" stroke-linecap="round"/><path d="M10.400 0.300L13.200 2.800 10.400 5.300z M10.400 6.100L13.200 8.600 10.400 11.100z" fill="#1d4f82"/></svg>
<div class="t" style="left:134.8px;top:587px;font-size:11.5px;color:#1d4f82;letter-spacing:0.107px;font-weight:bold;">wocu-engineer-snmpv3</div>
<svg class="a" style="left:297.8px;top:587.0px;" width="10" height="11.5" viewBox="0 0 10 11.500"><path d="M3.300 2.600C3.300 4.400 1.200 6 1.200 8.400L3 10.200H7L8.800 8.400C8.800 6 6.700 4.400 6.700 2.600z" fill="#2b3641"/><ellipse cx="5" cy="1.900" rx="1.750" ry="1.800" fill="#2b3641"/><ellipse cx="5" cy="6.600" rx="2.050" ry="3" fill="#f1f1f1"/><path d="M3.300 10.300h3.400v-.7H3.300z" fill="#555e66"/><ellipse cx="4.900" cy="3.100" rx="1.050" ry="0.850" fill="#f0b31a"/><path d="M0.200 9.300L2.100 7.100 3.700 10.100C3.300 11.400 .7 11.300 .2 9.300z" fill="#fbbc05"/><path d="M9.800 9.300L7.900 7.300 6.300 10.100C6.700 11.400 9.300 11.300 9.800 9.300z" fill="#fbbc05"/></svg>
<svg class="a" style="left:315px;top:587.5px;" width="13" height="9.7" viewBox="0 0 13 10"><path d="M2.600 0.700h7.800c.8 0 1.300.4 1.500 1.100l.5 2.300c.1.300.1.600.1.900v3c0 .8-.5 1.300-1.300 1.300H1.800C1 9.300.5 8.800.5 8V5c0-.3 0-.6.100-.9l.5-2.300C1.300 1.100 1.800.7 2.600.7z" fill="none" stroke="#454c54" stroke-width="1.150"/><path d="M1 5.400h11" stroke="#454c54" stroke-width="1.100"/><circle cx="2.5" cy="7.400" r="0.550" fill="#454c54"/><circle cx="4.5" cy="7.400" r="0.550" fill="#454c54"/><circle cx="6.5" cy="7.400" r="0.550" fill="#454c54"/><circle cx="8.5" cy="7.400" r="0.550" fill="#454c54"/><circle cx="10.5" cy="7.400" r="0.550" fill="#454c54"/></svg>
<div class="t" style="left:366.8px;top:587px;font-size:11.5px;color:#1d4f82;letter-spacing:0.193px;font-weight:bold;">Traffic_Red_Hat__Inc_De...</div>
<svg class="a" style="left:533px;top:587.5px;" width="13" height="9.7" viewBox="0 0 13 10"><path d="M2.600 0.700h7.800c.8 0 1.300.4 1.500 1.100l.5 2.300c.1.300.1.600.1.900v3c0 .8-.5 1.300-1.300 1.300H1.800C1 9.300.5 8.800.5 8V5c0-.3 0-.6.100-.9l.5-2.300C1.300 1.100 1.800.7 2.600.7z" fill="none" stroke="#454c54" stroke-width="1.150"/><path d="M1 5.400h11" stroke="#454c54" stroke-width="1.100"/><circle cx="2.5" cy="7.400" r="0.550" fill="#454c54"/><circle cx="4.5" cy="7.400" r="0.550" fill="#454c54"/><circle cx="6.5" cy="7.400" r="0.550" fill="#454c54"/><circle cx="8.5" cy="7.400" r="0.550" fill="#454c54"/><circle cx="10.5" cy="7.400" r="0.550" fill="#454c54"/></svg>
<div class="a" style="left:597px;top:584px;width:76px;height:16.7px;background:#c4e1fb;border-radius:9px"></div>
<div class="t" style="left:602.8px;top:586px;font-size:11.5px;color:#3f9ef0;letter-spacing:0.434px;font-weight:bold;">UNKNOWN</div>
<svg class="a" style="left:676.85px;top:584.45px;" width="77.18" height="16.30" viewBox="0 0 77.18 16.30"><polygon points="8.15,2.00 9.85,5.81 14.00,6.25 10.90,9.04 11.76,13.13 8.15,11.04 4.54,13.13 5.40,9.04 2.30,6.25 6.45,5.81" fill="none" stroke="#f4a326" stroke-width="1.2" stroke-linejoin="round"/><polygon points="23.37,2.00 25.07,5.81 29.22,6.25 26.12,9.04 26.98,13.13 23.37,11.04 19.76,13.13 20.62,9.04 17.52,6.25 21.67,5.81" fill="none" stroke="#f4a326" stroke-width="1.2" stroke-linejoin="round"/><polygon points="38.59,2.00 40.29,5.81 44.44,6.25 41.34,9.04 42.20,13.13 38.59,11.04 34.98,13.13 35.84,9.04 32.74,6.25 36.89,5.81" fill="none" stroke="#f4a326" stroke-width="1.2" stroke-linejoin="round"/><polygon points="53.81,2.00 55.51,5.81 59.66,6.25 56.56,9.04 57.42,13.13 53.81,11.04 50.20,13.13 51.06,9.04 47.96,6.25 52.11,5.81" fill="none" stroke="#f4a326" stroke-width="1.2" stroke-linejoin="round"/><polygon points="69.03,2.00 70.73,5.81 74.88,6.25 71.78,9.04 72.64,13.13 69.03,11.04 65.42,13.13 66.28,9.04 63.18,6.25 67.33,5.81" fill="none" stroke="#f4a326" stroke-width="1.2" stroke-linejoin="round"/></svg>
<div class="t" style="left:802.6px;top:587px;font-size:11.5px;color:#1a1a1a;letter-spacing:0.201px;">11:09:58</div>
<div class="t" style="left:926.5px;top:586px;font-size:11.500px;color:#1a1a1a;letter-spacing:-0.150px">13 <span style="color:#666">d</span> 1 <span style="color:#666">h</span></div>
<div class="t" style="left:1054.2px;top:587px;font-size:11.5px;color:#1a1a1a;letter-spacing:0.278px;">UNKNOWN - [Pack Error] EXX...</div>
<svg class="a" style="left:1240.8px;top:588.7px;" width="11.5" height="9.6" viewBox="0 0 11.500 9.600"><path d="M0.500 4.100L4.200 0.800 6.800 3.100 10.900 0.500" fill="none" stroke="#1d4f82" stroke-width="1.250" stroke-linecap="round" stroke-linejoin="round"/><path d="M1.600 6.500V9.600M4.300 4.500V9.600M7.100 5.500V9.600M9.900 3.900V9.600" stroke="#1d4f82" stroke-width="1.500"/></svg>
<div class="a" style="left:1329.2px;top:578.3px;width:26.6px;height:26.4px;border:1px solid #979da3;border-radius:5px"></div>
<svg class="a" style="left:1336px;top:590px" width="13" height="4" viewBox="0 0 13 4"><circle cx="2" cy="2" r="1.400" fill="#111"/><circle cx="6.500" cy="2" r="1.400" fill="#111"/><circle cx="11" cy="2" r="1.400" fill="#111"/></svg>
</body></html>
